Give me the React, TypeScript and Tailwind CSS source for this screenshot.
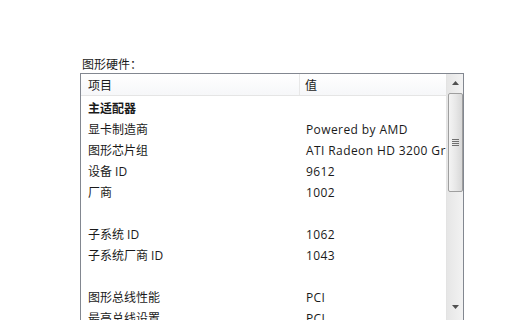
import React from "react";

const rows: { k: string; v: string; bold?: boolean }[] = [
  { k: "主适配器", v: "", bold: true },
  { k: "显卡制造商", v: "Powered by AMD" },
  { k: "图形芯片组", v: "ATI Radeon HD 3200 Graphics" },
  { k: "设备 ID", v: "9612" },
  { k: "厂商", v: "1002" },
  { k: "", v: "" },
  { k: "子系统 ID", v: "1062" },
  { k: "子系统厂商 ID", v: "1043" },
  { k: "", v: "" },
  { k: "图形总线性能", v: "PCI" },
  { k: "最高总线设置", v: "PCI" },
  { k: "", v: "" },
];

export default function App() {
  return (
    <div
      className="w-[532px] h-[320px] overflow-hidden bg-white pl-[80px] pt-[57px] text-[12px] text-[#1a1a1a]"
      style={{ fontFamily: '"Open Sans", "Noto Sans CJK SC", sans-serif' }}
    >
      <div className="pl-[2px] h-[16px] leading-[16px]">图形硬件：</div>
      <div className="w-[384px] h-[300px] border border-[#828790] flex">
        <div className="flex-1 min-w-0 overflow-hidden">
          <div className="flex h-[22px] border-b border-[#e5e5e5] bg-gradient-to-b from-white to-[#f6f7f9] leading-[23px] overflow-hidden">
            <div className="w-[219px] shrink-0 pl-[7px] border-r border-[#e8e8e8]">项目</div>
            <div className="pl-[5px] whitespace-nowrap">值</div>
          </div>
          <div className="pt-[2px]">
            {rows.map((r, i) => (
              <div key={i} className="flex h-[21px] leading-[21px]">
                <div className={`w-[219px] shrink-0 pl-[7px] ${r.bold ? "font-bold" : ""}`}>{r.k}</div>
                <div className="pl-[6px] whitespace-nowrap tracking-[0.4px]">{r.v}</div>
              </div>
            ))}
          </div>
        </div>
        <div className="w-[17px] shrink-0 bg-gradient-to-r from-[#e6e6e6] to-[#f2f2f2] border-l border-[#e3e3e3] flex flex-col items-center">
          <div className="h-[18px] w-full flex items-center justify-center">
            <svg width="7" height="4" viewBox="0 0 7 4">
              <path d="M3.5 0 L7 4 L0 4 Z" fill="#505050" />
            </svg>
          </div>
          <div className="mt-[1px] w-[15px] h-[99px] rounded-[2px] border border-[#9f9f9f] bg-gradient-to-r from-[#f4f4f4] via-[#e8e8e8] to-[#d8d8d8] flex items-center justify-center">
            <div className="flex flex-col gap-[1px]">
              <div className="w-[7px] h-[1px] bg-[#707070]" />
              <div className="w-[7px] h-[1px] bg-[#707070]" />
              <div className="w-[7px] h-[1px] bg-[#707070]" />
              <div className="w-[7px] h-[1px] bg-[#707070]" />
            </div>
          </div>
          <div className="flex-1" />
          <div className="h-[18px] w-full flex items-start justify-center pt-[7px] mb-[56px]">
            <svg width="7" height="4" viewBox="0 0 7 4">
              <path d="M0 0 L7 0 L3.5 4 Z" fill="#505050" />
            </svg>
          </div>
        </div>
      </div>
    </div>
  );
}
